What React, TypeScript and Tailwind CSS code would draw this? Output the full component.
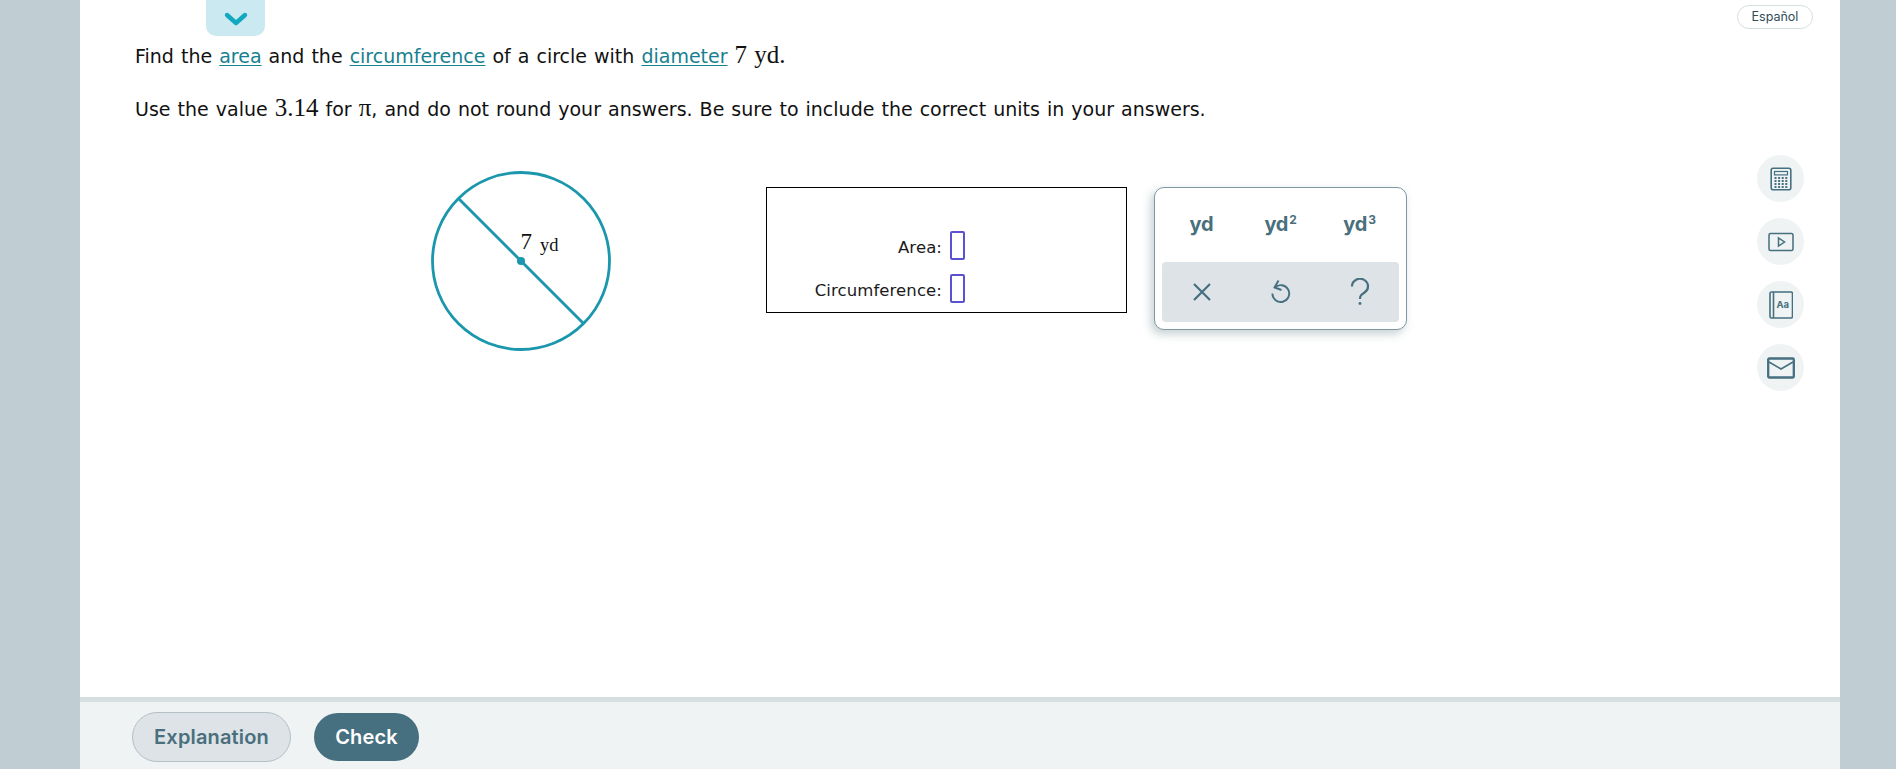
import React from 'react'

const math = "font-['Liberation_Serif',serif] text-[25px]"
const prose = 'text-[19px] [word-spacing:1px] leading-[32px] text-[#111]'

const TermLink = ({ children }: { children: React.ReactNode }) => (
    <a className="text-[#17808f] underline underline-offset-2 decoration-1">{children}</a>
)

const CircleFigure = () => (
    <svg width="186" height="186" viewBox="0 0 186 186" className="shrink-0">
        <circle cx="93" cy="93" r="88.5" fill="none" stroke="#1b97ad" strokeWidth="2.8" />
        <line x1="30" y1="30" x2="155" y2="155" stroke="#1b97ad" strokeWidth="2.8" />
        <circle cx="93" cy="93" r="4" fill="#1b97ad" />
        <text x="92.5" y="81" fontFamily="Liberation Serif, serif" fontSize="23" fill="#111">7</text>
        <text x="112" y="83" fontFamily="Liberation Serif, serif" fontSize="18.5" fill="#111">yd</text>
    </svg>
)

const AnswerRow = ({ label }: { label: string }) => (
    <div className="flex items-center justify-end gap-2 h-[28px]">
        <span className="text-[16.5px] tracking-[0.1px] text-[#1a1a1a] relative top-[3px]">{label}</span>
        <div className="w-[15px] h-[29px] border-2 border-[#5b52cf] rounded-[2px]" />
    </div>
)

const Unit = ({ sup }: { sup?: string }) => (
    <button className="w-[81px] text-center font-['Inter',sans-serif] font-bold text-[20px] tracking-[-0.2px] text-[#4a6f7d] leading-none">
        yd{sup && <sup className="text-[12px] relative -top-[7px] align-baseline ml-px">{sup}</sup>}
    </button>
)

const UnitPalette = () => (
    <div className="w-[253px] h-[143px] border border-[#7f98a3] rounded-[10px] bg-white shadow-[-3px_4px_10px_rgba(90,120,130,0.35)] p-[7px] flex flex-col">
        <div className="flex-1 flex items-center justify-around pb-[10px]">
            <Unit />
            <Unit sup="2" />
            <Unit sup="3" />
        </div>
        <div className="h-[60px] bg-[#dde3e6] rounded-[4px] flex items-center justify-around">
            <button className="w-[60px] flex justify-center">
                <svg width="22" height="22" viewBox="0 0 22 22" fill="none" stroke="#466f80" strokeWidth="2.2">
                    <path d="M3 3l16 16M19 3L3 19" />
                </svg>
            </button>
            <button className="w-[60px] flex justify-center pr-[2px]">
                <svg width="22" height="28" viewBox="0 0 22 28" fill="none" stroke="#466f80" strokeWidth="1.9">
                    <path d="M6 9.5a8.4 8.4 0 1 1-2.6 6" />
                    <path d="M9.5 2.5L5.5 9.5l7 2.5" />
                </svg>
            </button>
            <button className="w-[60px] flex justify-center pl-[1px]">
                <svg width="20" height="28" viewBox="0 0 20 28" fill="none" stroke="#466f80" strokeWidth="2.2">
                    <path d="M2 8.5a8 7.5 0 1 1 12.5 6c-3 2-4.5 3-4.5 6.5" />
                    <circle cx="10" cy="25.5" r="1.4" fill="#466f80" stroke="none" />
                </svg>
            </button>
        </div>
    </div>
)

const ToolButton = ({ children }: { children: React.ReactNode }) => (
    <button className="size-[47px] rounded-full bg-[#eff3f4] flex items-center justify-center">{children}</button>
)

const App = () => {
    return (
        <div className="h-[769px] bg-[#c0ced4] px-[80px] overflow-hidden font-['DejaVu_Sans',sans-serif]">
            <div className="relative h-full w-[1760px] bg-white flex flex-col">
                {/* collapse tab */}
                <button className="absolute top-0 left-[126px] w-[59px] h-[36px] bg-[#cbe9f0] rounded-b-[10px] flex items-center justify-center pt-[1px]">
                    <svg width="26" height="16" viewBox="0 0 26 16" fill="none" stroke="#12a8bf" strokeWidth="4.4" strokeLinecap="round" strokeLinejoin="round">
                        <path d="M4 4l9 8 9-8" />
                    </svg>
                </button>
                <button className="absolute top-[5px] right-[27px] w-[76px] h-[24px] border border-[#d5dfe1] rounded-full font-['Inter',sans-serif] text-[12.5px] text-[#2f4d58] bg-white">
                    Español
                </button>

                <div className="flex-1 flex">
                    {/* question */}
                    <div className="flex-1 pl-[55px] pt-[39px]">
                        <p className={prose}>
                            Find the <TermLink>area</TermLink> and the <TermLink>circumference</TermLink> of a circle with{' '}
                            <TermLink>diameter</TermLink> <span className={math}>7 yd.</span>
                        </p>
                        <p className={`mt-[20px] ${prose}`}>
                            Use the value <span className={math}>3.14</span> for <span className={math}>π</span>, and do not round your answers. Be sure to include the correct units in your answers.
                        </p>
                        <div className="flex items-start mt-[43px] pl-[293px]">
                            <CircleFigure />
                            <div className="ml-[152px] mt-[19px] w-[361px] h-[126px] border-[1.5px] border-black flex flex-col justify-end gap-[15px] pb-[10px] pr-[161px]">
                                <AnswerRow label="Area:" />
                                <AnswerRow label="Circumference:" />
                            </div>
                            <div className="ml-[27px] mt-[19px]">
                                <UnitPalette />
                            </div>
                        </div>
                    </div>

                    {/* tools */}
                    <div className="w-[83px] pt-[155px] flex flex-col gap-[16px]">
                        <ToolButton>
                            <svg width="22" height="24" viewBox="0 0 22 24" fill="none" stroke="#466f80">
                                <rect x="1.2" y="1.2" width="19.6" height="21.6" rx="2" strokeWidth="1.6" />
                                <rect x="4.5" y="4.5" width="13" height="3.4" strokeWidth="1.2" />
                                <path d="M4.5 11h13M4.5 14h13M4.5 17h13M4.5 20h13" strokeWidth="1.8" strokeDasharray="2 1.6" />
                            </svg>
                        </ToolButton>
                        <ToolButton>
                            <svg width="26" height="20" viewBox="0 0 26 20" fill="none" stroke="#466f80" strokeWidth="1.5">
                                <rect x="1" y="1.5" width="24" height="17" rx="1.5" />
                                <path d="M10.5 6v8l6-4z" />
                            </svg>
                        </ToolButton>
                        <ToolButton>
                            <svg width="24" height="28" viewBox="0 0 24 28" fill="none" stroke="#466f80" strokeWidth="1.6">
                                <rect x="1" y="1" width="22.5" height="26" rx="1.5" />
                                <path d="M4.5 1v26" />
                                <text x="7.5" y="16.5" fontFamily="Inter, sans-serif" fontWeight="700" fontSize="9.5" fill="#466f80" stroke="none">Aa</text>
                            </svg>
                        </ToolButton>
                        <ToolButton>
                            <svg width="28" height="22" viewBox="0 0 28 22" fill="none" stroke="#466f80" strokeWidth="2.3">
                                <rect x="1.2" y="1.5" width="25.6" height="19" rx="1" />
                                <path d="M2 5l12 7 12-7" strokeWidth="1.6" />
                            </svg>
                        </ToolButton>
                    </div>
                </div>

                {/* footer */}
                <div className="h-[72px] border-t-[5px] border-[#d5dfe1] bg-[#eff3f4] flex items-center gap-[23px] pl-[52px] pt-[2px] font-['Inter',sans-serif] text-[20px] font-semibold tracking-[0.15px]">
                    <button className="w-[159px] h-[50px] rounded-full bg-[#dde3e6] border border-[#b5c0c4] text-[#4a6f7d]">Explanation</button>
                    <button className="w-[105px] h-[48px] rounded-full bg-[#466f80] text-white">Check</button>
                </div>
            </div>
        </div>
    )
}

export default App
